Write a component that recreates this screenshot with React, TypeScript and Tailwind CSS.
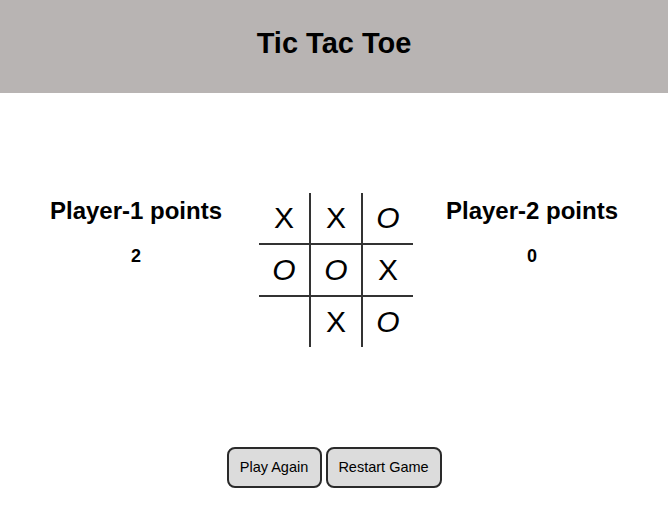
import React from "react";

const board: string[] = ["X", "X", "O", "O", "O", "X", "", "X", "O"];

function Cell({ value, index }: { value: string; index: number }) {
    const col = index % 3;
    const row = Math.floor(index / 3);
    const right = col < 2 ? "border-r-2" : "";
    const bottom = row < 2 ? "border-b-2" : "";
    return (
        <div
            className={`flex items-center justify-center border-[#333333] ${right} ${bottom} ${
                col < 2 ? "w-[52px]" : "w-[50px]"
            } ${row < 2 ? "h-[52px]" : "h-[50px]"} text-[30px] leading-none text-black ${
                value === "O" ? "italic" : ""
            }`}
        >
            {value}
        </div>
    );
}

function Score({ label, points }: { label: string; points: number }) {
    return (
        <div className="w-[190px] flex flex-col items-center pt-[4px]">
            <h2 className="text-[24px] font-bold leading-[27px]">{label}</h2>
            <div className="mt-[22px] text-[18px] font-bold leading-[21px]">{points}</div>
        </div>
    );
}

export default function App() {
    return (
        <div className="min-h-screen bg-white text-black font-['Liberation_Sans',Arial,sans-serif]">
            <header className="h-[93px] bg-[#b8b4b3] flex items-center justify-center">
                <h1 className="text-[29px] font-bold leading-none -mt-[7px]">Tic Tac Toe</h1>
            </header>

            <main className="flex justify-center items-start pt-[100px]">
                <Score label="Player-1 points" points={2} />
                <div className="ml-[28px] mr-[24px] flex flex-wrap w-[154px]">
                    {board.map((v, i) => (
                        <Cell key={i} value={v} index={i} />
                    ))}
                </div>
                <Score label="Player-2 points" points={0} />
            </main>

            <div className="flex justify-center gap-[4px] mt-[100px]">
                <button className="h-[41px] w-[95px] rounded-[8px] border-2 border-[#2a2a2a] bg-[#dcdcdc] text-[14.5px]">
                    Play Again
                </button>
                <button className="h-[41px] w-[116px] rounded-[8px] border-2 border-[#2a2a2a] bg-[#dcdcdc] text-[14.5px]">
                    Restart Game
                </button>
            </div>
        </div>
    );
}
